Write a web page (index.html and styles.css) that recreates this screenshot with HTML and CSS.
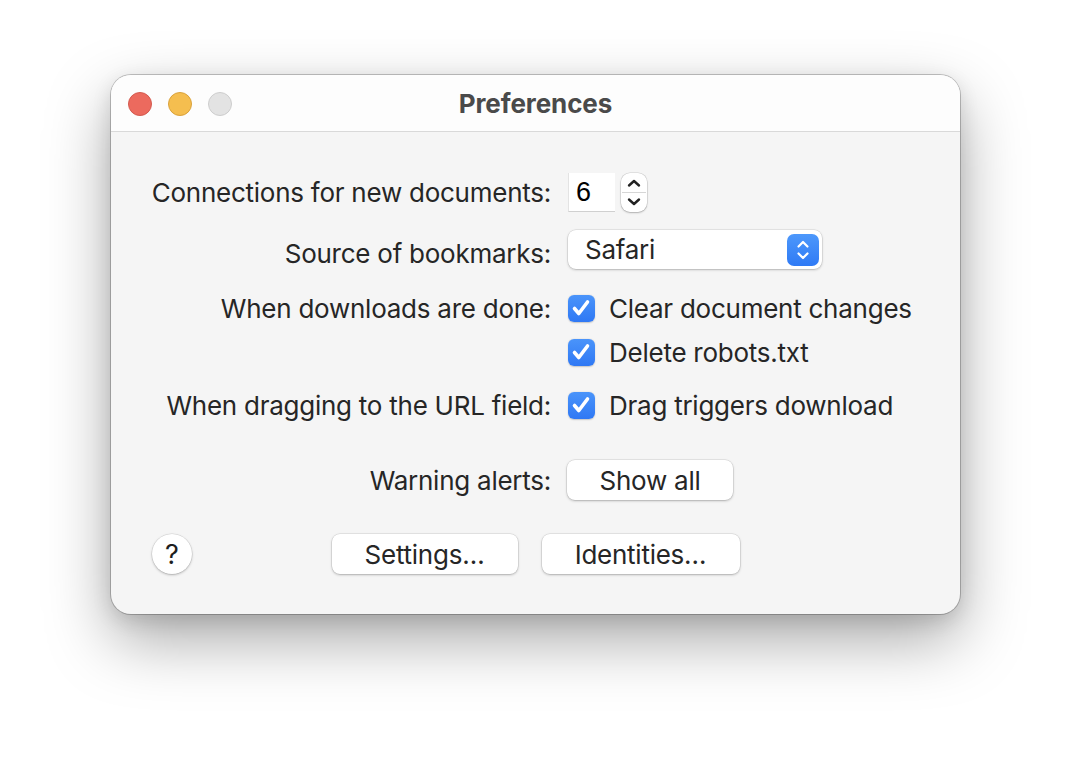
FILE: index.html
```html
<!DOCTYPE html>
<html>
<head>
<meta charset="utf-8">
<link rel="stylesheet" href="styles.css">
</head>
<body>
<div class="stage">
  <div class="window">
    <div class="titlebar">
      <div class="lights">
        <span class="light red"></span>
        <span class="light yellow"></span>
        <span class="light grey"></span>
      </div>
      <div class="title">Preferences</div>
    </div>
    <div class="content">
      <div class="form">
        <div class="label r1">Connections for new documents:</div>
        <div class="control r1">
          <div class="stepper-field">6</div>
          <div class="stepper">
            <svg width="26" height="39" viewBox="0 0 26 39">
              <path d="M8 12.5 L13 8 L18 12.5" fill="none" stroke="#222" stroke-width="2.4" stroke-linecap="round" stroke-linejoin="round"/>
              <line x1="1" y1="19.5" x2="25" y2="19.5" stroke="#d6d6d6" stroke-width="1"/>
              <path d="M8 26.5 L13 31 L18 26.5" fill="none" stroke="#222" stroke-width="2.4" stroke-linecap="round" stroke-linejoin="round"/>
            </svg>
          </div>
        </div>

        <div class="label r2">Source of bookmarks:</div>
        <div class="control r2">
          <div class="popup">
            <span class="popup-text">Safari</span>
            <span class="popup-btn">
              <svg width="32" height="32" viewBox="0 0 32 32">
                <path d="M11.5 12.5 L16 8 L20.5 12.5" fill="none" stroke="#fff" stroke-width="2.2" stroke-linecap="round" stroke-linejoin="round"/>
                <path d="M11.5 19.5 L16 24 L20.5 19.5" fill="none" stroke="#fff" stroke-width="2.2" stroke-linecap="round" stroke-linejoin="round"/>
              </svg>
            </span>
          </div>
        </div>

        <div class="label r3">When downloads are done:</div>
        <div class="control r3 checks">
          <div class="check-row">
            <span class="checkbox"><svg width="26" height="26" viewBox="0 0 26 26"><path d="M6.5 13.5 L10.8 18.5 L19.5 7" fill="none" stroke="#fff" stroke-width="3.6" stroke-linecap="round" stroke-linejoin="round"/></svg></span>
            <span class="check-text">Clear document changes</span>
          </div>
          <div class="check-row">
            <span class="checkbox"><svg width="26" height="26" viewBox="0 0 26 26"><path d="M6.5 13.5 L10.8 18.5 L19.5 7" fill="none" stroke="#fff" stroke-width="3.6" stroke-linecap="round" stroke-linejoin="round"/></svg></span>
            <span class="check-text">Delete robots.txt</span>
          </div>
        </div>

        <div class="label r4">When dragging to the URL field:</div>
        <div class="control r4">
          <div class="check-row">
            <span class="checkbox"><svg width="26" height="26" viewBox="0 0 26 26"><path d="M6.5 13.5 L10.8 18.5 L19.5 7" fill="none" stroke="#fff" stroke-width="3.6" stroke-linecap="round" stroke-linejoin="round"/></svg></span>
            <span class="check-text">Drag triggers download</span>
          </div>
        </div>

        <div class="label r5">Warning alerts:</div>
        <div class="control r5">
          <button class="btn btn-show">Show all</button>
        </div>
      </div>

      <div class="footer">
        <div class="footer-left"><button class="help">?</button></div>
        <div class="footer-buttons">
          <button class="btn btn-settings">Settings…</button>
          <button class="btn btn-identities">Identities…</button>
        </div>
        <div class="footer-right"></div>
      </div>
    </div>
  </div>
</div>
</body>
</html>
```

FILE: styles.css
```css
* { box-sizing: border-box; }
html, body { margin: 0; padding: 0; background: #ffffff; }
body {
  width: 1072px;
  height: 762px;
  overflow: hidden;
  font-family: Inter, "Liberation Sans", sans-serif;
  color: #262626;
}
.stage {
  padding: 75px 0 0 111px;
}
.window {
  width: 849px;
  height: 539px;
  border-radius: 20px;
  background: #f5f5f5;
  box-shadow: 0 0 0 1px rgba(0,0,0,0.22), 0 26px 64px rgba(0,0,0,0.34), 0 6px 20px rgba(0,0,0,0.12);
  overflow: hidden;
}
.titlebar {
  height: 57px;
  background: #fdfdfd;
  border-bottom: 1px solid #d9d9d9;
  display: grid;
  grid-template-columns: 1fr auto 1fr;
  align-items: center;
}
.lights {
  display: flex;
  gap: 16px;
  padding-left: 17px;
  padding-top: 1px;
}
.light {
  width: 24px;
  height: 24px;
  border-radius: 50%;
}
.red { background: #ec6a5e; border: 1px solid #d35a4f; }
.yellow { background: #f5be4f; border: 1px solid #d9a23c; }
.grey { background: #e3e3e3; border: 1px solid #cdcdcd; }
.title {
  font-weight: 700;
  font-size: 26px;
  color: #4a4a4a;
  letter-spacing: -0.1px;
}
.content {
  padding-top: 40px;
}
.form {
  display: grid;
  grid-template-columns: 440px 1fr;
  column-gap: 17px;
  font-size: 26px;
  letter-spacing: -0.25px;
}
.label {
  text-align: right;
  height: 40px;
  line-height: 40px;
  padding-top: 1px;
  white-space: nowrap;
}
.control {
  display: flex;
  align-items: center;
  min-height: 40px;
}
.r2 { margin-top: 21px; }
.r3 { margin-top: 15px; }
.r4 { margin-top: 13px; }
.r5 { margin-top: 35px; }
.checks {
  flex-direction: column;
  align-items: flex-start;
  gap: 4px;
}
.stepper-field {
  width: 47px;
  height: 39px;
  background: #ffffff;
  border-left: 1px solid #e3e3e3;
  border-bottom: 1px solid #d0d0d0;
  font-family: "Liberation Sans", Arial, sans-serif;
  font-size: 27px;
  letter-spacing: 0;
  color: #000;
  padding-left: 7px;
  line-height: 39px;
}
.stepper {
  margin-left: 6px;
  width: 26px;
  height: 39px;
  border-radius: 9px;
  background: #ffffff;
  box-shadow: 0 0 0 0.5px rgba(0,0,0,0.15), 0 1px 2px rgba(0,0,0,0.22);
  display: flex;
}
.popup {
  width: 254px;
  height: 39px;
  border-radius: 8px;
  background: #ffffff;
  box-shadow: 0 0 0 0.5px rgba(0,0,0,0.12), 0 1px 2.5px rgba(0,0,0,0.22);
  display: flex;
  align-items: center;
  justify-content: space-between;
  padding: 0 3px 0 17px;
  margin-top: -7px;
}
.popup-text { font-size: 26px; }
.popup-btn {
  width: 32px;
  height: 32px;
  border-radius: 7px;
  background: linear-gradient(#4d98fb, #2f7af5);
  display: flex;
}
.check-row {
  display: flex;
  align-items: center;
  gap: 14px;
  height: 40px;
}
.checkbox {
  width: 27px;
  height: 27px;
  border-radius: 6px;
  background: linear-gradient(#4a94fa, #2f78f4);
  box-shadow: 0 0.5px 1.5px rgba(0,0,0,0.2);
  display: flex;
}
.btn {
  font-family: Inter, "Liberation Sans", sans-serif;
  font-size: 26px;
  letter-spacing: -0.25px;
  color: #262626;
  background: #ffffff;
  border: none;
  border-radius: 8px;
  height: 40px;
  box-shadow: 0 0 0 0.5px rgba(0,0,0,0.12), 0 1px 2.5px rgba(0,0,0,0.25);
  padding: 0;
}
.btn-show { width: 166px; margin-left: -1px; }
.footer {
  display: grid;
  grid-template-columns: 1fr auto 1fr;
  align-items: center;
  margin-top: 34px;
}
.footer-left { padding-left: 41px; display: flex; }
.help {
  width: 40px;
  height: 40px;
  border-radius: 50%;
  border: none;
  background: #ffffff;
  box-shadow: 0 0 0 0.5px rgba(0,0,0,0.12), 0 1px 2.5px rgba(0,0,0,0.25);
  font-family: Inter, "Liberation Sans", sans-serif;
  font-size: 27px;
  font-weight: 400;
  color: #1e1e1e;
  padding: 0;
}
.footer-buttons {
  display: flex;
  gap: 24px;
}
.btn-settings { width: 186px; }
.btn-identities { width: 198px; }
```
